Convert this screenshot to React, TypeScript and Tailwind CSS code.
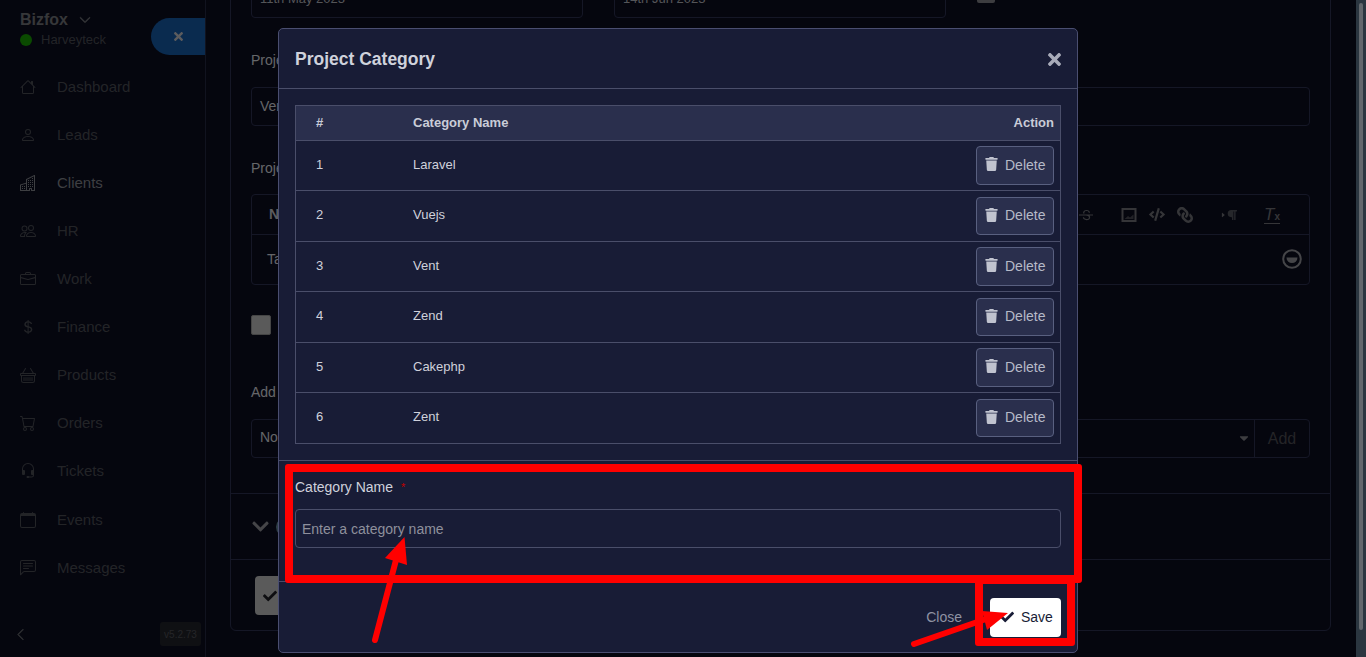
import React from 'react';
import {
  BsHouse,
  BsPerson,
  BsBuildings,
  BsPeople,
  BsBriefcase,
  BsCurrencyDollar,
  BsBasket,
  BsCart,
  BsHeadset,
  BsCalendar,
  BsChatLeftText,
  BsTypeStrikethrough,
  BsChevronDown,
  BsChevronLeft,
  BsCaretRightFill,
} from 'react-icons/bs';
import { FaTrash, FaTimes, FaCheck, FaCaretDown, FaChevronDown, FaCode, FaLink, FaParagraph } from 'react-icons/fa';

const navItems = [
  { label: 'Dashboard', icon: BsHouse, cls: 'text-[#46484f]' },
  { label: 'Leads', icon: BsPerson, cls: 'text-[#46484f]' },
  { label: 'Clients', icon: BsBuildings, cls: 'text-[#7c7e84]' },
  { label: 'HR', icon: BsPeople, cls: 'text-[#46484f]' },
  { label: 'Work', icon: BsBriefcase, cls: 'text-[#46484f]' },
  { label: 'Finance', icon: BsCurrencyDollar, cls: 'text-[#46484f]' },
  { label: 'Products', icon: BsBasket, cls: 'text-[#46484f]' },
  { label: 'Orders', icon: BsCart, cls: 'text-[#46484f]' },
  { label: 'Tickets', icon: BsHeadset, cls: 'text-[#46484f]' },
  { label: 'Events', icon: BsCalendar, cls: 'text-[#46484f] mt-px' },
  { label: 'Messages', icon: BsChatLeftText, cls: 'text-[#46484f]' },
];

const categories = [
  { id: 1, name: 'Laravel' },
  { id: 2, name: 'Vuejs' },
  { id: 3, name: 'Vent' },
  { id: 4, name: 'Zend' },
  { id: 5, name: 'Cakephp' },
  { id: 6, name: 'Zent' },
];

const Sidebar = () => (
  <aside className="w-[206px] h-full shrink-0 flex flex-col border-r border-[#23263f] relative">
    <div className="h-[63px] pl-5 pt-[11px] shrink-0">
      <div className="flex items-center gap-[11px] text-[16px] font-bold text-[#6c6e72] leading-[18px]">
        Bizfox
        <BsChevronDown className="w-[12px] h-[12px]" strokeWidth={1} />
      </div>
      <div className="flex items-center gap-[9px] text-[13px] text-[#46484f] leading-[16px] mt-[3px]">
        <span className="w-3 h-3 rounded-full bg-[#149400]" />
        Harveyteck
      </div>
    </div>
    {navItems.map((item) => {
      const Icon = item.icon;
      return (
        <div key={item.label} className={`h-12 flex items-center pl-5 gap-[21px] text-[15px] shrink-0 ${item.cls}`}>
          <Icon className="w-4 h-4 shrink-0" />
          {item.label}
        </div>
      );
    })}
    <div className="mt-auto flex items-center justify-between pl-[14px] pr-[4px] pb-[11px]">
      <BsChevronLeft className="w-[13px] h-[13px] text-[#55575e]" strokeWidth={1} />
      <span className="w-[41px] h-6 rounded-[3px] bg-[#1f2026] text-[#4a4b51] text-[10px] flex items-center justify-center">
        v5.2.73
      </span>
    </div>
    <div className="absolute top-[18px] right-0 w-[54px] h-[37px] rounded-l-full bg-[#14569f] flex items-center justify-center">
      <FaTimes className="w-[9px] h-[13px] text-[#b8b8bc]" />
    </div>
  </aside>
);

const Background = () => (
  <main className="flex-1 h-full min-w-0 overflow-hidden pl-[24px] pr-[25px]">
    <div className="-mt-[40px] h-[671px] border border-[#2a2e4c] rounded-[6px]">
      <div className="px-5 pt-[18px] h-[533px] border-b border-[#2a2e4c]">
        <div className="flex gap-[31px] items-start">
          <div className="w-[332px] h-[39px] border border-[#2a2e4c] rounded-[4px] px-2 flex items-center text-[13px] text-[#a9abb1]">
            11th May 2023
          </div>
          <div className="w-[332px] h-[39px] border border-[#2a2e4c] rounded-[4px] px-2 flex items-center text-[13px] text-[#a9abb1]">
            14th Jun 2023
          </div>
          <div className="mt-[6px] w-[18px] h-[18px] bg-[#7a7b80] rounded-[2px]" />
        </div>
        <div className="mt-[34px] w-[27px] overflow-hidden whitespace-nowrap text-[14px] leading-[16px] text-[#cbcdd2]">Project</div>
        <div className="mt-[19px] h-[39px] border border-[#2a2e4c] rounded-[4px] flex items-center px-2 text-[14px] text-[#c8cad0]">
          Vent
        </div>
        <div className="mt-[34px] w-[27px] overflow-hidden whitespace-nowrap text-[14px] leading-[16px] text-[#cbcdd2]">Project</div>
        <div className="mt-[18px] h-[91px] border border-[#2a2e4c] rounded-[4px]">
          <div className="h-10 border-b border-[#2a2e4c] flex items-center pl-[17px] pr-[29px] text-[#6a6b70]">
            <span className="text-[14px] font-bold text-[#b8bac0]">Normal</span>
            <BsTypeStrikethrough className="ml-auto w-4 h-4" />
            <svg viewBox="0 0 16 16" className="ml-[27px] w-4 h-4">
              <rect x="1.500" y="2" width="13" height="12" fill="none" stroke="currentColor" strokeWidth="2" />
              <path d="M3.500 12 L7 9 L9 10.500 L12.500 7.500 V12 Z" fill="currentColor" opacity="0.6" />
            </svg>
            <FaCode className="ml-[12px] w-4 h-[13px]" />
            <FaLink className="ml-[12px] w-4 h-4 -scale-x-100" />
            <span className="ml-[27px] w-4 flex items-center">
              <BsCaretRightFill className="w-[6px] h-[8px] shrink-0" />
              <FaParagraph className="w-[10px] h-[14px] ml-px shrink-0 opacity-70" />
            </span>
            <span className="ml-[28px] w-4 text-[17px] italic leading-none border-b border-[#6a6b70]">
              T<span className="text-[10px] not-italic font-bold">x</span>
            </span>
          </div>
          <div className="h-[49px] flex items-center pl-[15px] pr-[7px] text-[14px] text-[#c8cad0]">
            Task
            <svg viewBox="0 0 20 20" className="ml-auto -mt-[2px] w-5 h-5 text-[#8a8b90]">
              <circle cx="10" cy="10" r="8.800" fill="none" stroke="currentColor" strokeWidth="2" />
              <path d="M4.500 8.500h11a5.500 5.500 0 0 1-11 0z" fill="currentColor" />
            </svg>
          </div>
        </div>
        <div className="mt-[29px] flex items-center gap-3">
          <span className="w-5 h-5 bg-[#b4b4b4] rounded-[2px] border border-[#8a8a8a]" />
          <span className="text-[14px] text-[#c8cad0]">Add</span>
        </div>
        <div className="mt-[49px] text-[14px] leading-[16px] text-[#cbcdd2]">Add Project Members</div>
        <div className="mt-[19px] h-[39px] border border-[#2a2e4c] rounded-[4px] flex items-center pl-2 text-[14px] text-[#c8cad0]">
          <span className="-mt-[2px]">Nothing selected</span>
          <FaCaretDown className="ml-auto mr-[3px] -mt-[2px] w-[14px] h-[14px] text-[#7a7b80]" />
          <span className="h-full w-[55px] border-l border-[#2a2e4c] flex items-center justify-center text-[16px] text-[#48494e]">
            Add
          </span>
        </div>
      </div>
      <div className="h-[66px] border-b border-[#2a2e4c] flex items-center pl-5 gap-[6px]">
        <FaChevronDown className="w-[19px] h-[19px] text-[#8a8b90]" />
        <span className="w-5 h-5 rounded-full bg-[#5c7d8e]" />
      </div>
      <div className="pt-4 pl-6">
        <div className="w-[110px] h-[39px] bg-[#b4b4b4] rounded-[4px] flex items-center pl-2">
          <FaCheck className="w-[14px] h-[14px] text-[#1c1c22]" />
        </div>
      </div>
    </div>
  </main>
);

const CategoryModal = () => (
  <div className="absolute left-[278px] top-[28px] w-[800px] h-[625px] bg-[#181c36] border border-[#4a4e70] rounded-[5px] flex flex-col text-[#d6d8e2]">
    <div className="h-[60px] shrink-0 border-b border-[#4a4e6a] flex items-center justify-between pl-4 pr-[16px]">
      <h5 className="text-[17.500px] leading-[22px] mt-px font-bold text-[#cfd2dc]">Project Category</h5>
      <FaTimes className="w-[13px] h-[19px] mt-[2px] text-[#a8abb9]" />
    </div>
    <div className="h-[372px] shrink-0 border-b border-[#4a4e6a] pt-4 px-4">
      <div className="border-t border-x border-[#4a4e6a]">
        <div className="h-[34.500px] bg-[#2a2f4d] border-b border-[#4a4e6a] flex items-center pr-[6px] text-[13px] font-bold text-[#c9ccd8]">
          <span className="w-[117px] pl-5">#</span>
          <span>Category Name</span>
          <span className="ml-auto">Action</span>
        </div>
        {categories.map((cat) => (
          <div key={cat.id} className="h-[50.500px] border-b border-[#4a4e6a] flex items-center pr-[6px] text-[13px] text-[#cfd1db]">
            <span className="w-[117px] pl-5 -mt-[2px]">{cat.id}</span>
            <span className="-mt-[2px]">{cat.name}</span>
            <button className="ml-auto w-[78px] h-[38.500px] bg-[#2a2f4d] border border-[#596080] rounded-[4px] flex items-center pl-2 gap-[7px] text-[14px] text-[#b6bac8]">
              <FaTrash className="w-[13px] h-[14px] -mt-[2px] text-[#c0c3cf]" />
              Delete
            </button>
          </div>
        ))}
      </div>
    </div>
    <div className="h-[121px] shrink-0 border-b border-[#4a4e6a] px-4 pt-[18px]">
      <label className="block text-[14px] leading-4 text-[#cfd1dc]">
        Category Name <span className="ml-[4px] text-[#c00000] text-[11px] align-top">*</span>
      </label>
      <div className="mt-[14px] h-[39px] border border-[#4a4e6a] rounded-[4px] flex items-center pt-[2px] px-[6px] text-[14px] text-[#8e909c]">
        Enter a category name
      </div>
    </div>
    <div className="flex-1 flex items-center justify-end pr-4 gap-[28px]">
      <span className="text-[14px] text-[#8f92a2]">Close</span>
      <button className="w-[71px] h-[39px] bg-white rounded-[4px] flex items-center pl-[10px] gap-[7px] text-[14px] text-[#181c36]">
        <FaCheck className="w-[14px] h-[14px]" />
        Save
      </button>
    </div>
  </div>
);

// red markup drawn on top of the screenshot
const Annotations = () => (
  <>
    <div className="absolute left-[285px] top-[464px] w-[797px] h-[119px] border-8 border-[#ff0000] rounded-[3px]" />
    <div className="absolute left-[975px] top-[576px] w-[100px] h-[70px] border-8 border-[#ff0000] rounded-[3px]" />
    <svg className="absolute inset-0 w-[1366px] h-[657px] pointer-events-none" viewBox="0 0 1366 657">
      <path d="M375 640 L396 560" stroke="#ff0000" strokeWidth="6" strokeLinecap="round" />
      <polygon points="404.500,537 385,558 407,565" fill="#ff0000" />
      <path d="M914 644 L986 619" stroke="#ff0000" strokeWidth="6" strokeLinecap="round" />
      <polygon points="1008,613 982,611 987,630" fill="#ff0000" />
    </svg>
  </>
);

export default function App() {
  return (
    <div className="relative w-[1366px] h-[657px] overflow-hidden flex bg-[#0a0c1d] font-['Liberation_Sans',Arial,sans-serif]">
      <div className="relative flex-1 min-w-0 h-full flex">
        <Sidebar />
        <Background />
        <div className="absolute inset-0 bg-black/50" />
      </div>
      <div className="w-[10px] h-full shrink-0 bg-[#2b3640] pt-[3px] pl-[3px]">
        <div className="w-[4px] h-[627px] bg-[#62676c] rounded-[2px]" />
      </div>
      <CategoryModal />
      <Annotations />
    </div>
  );
}
